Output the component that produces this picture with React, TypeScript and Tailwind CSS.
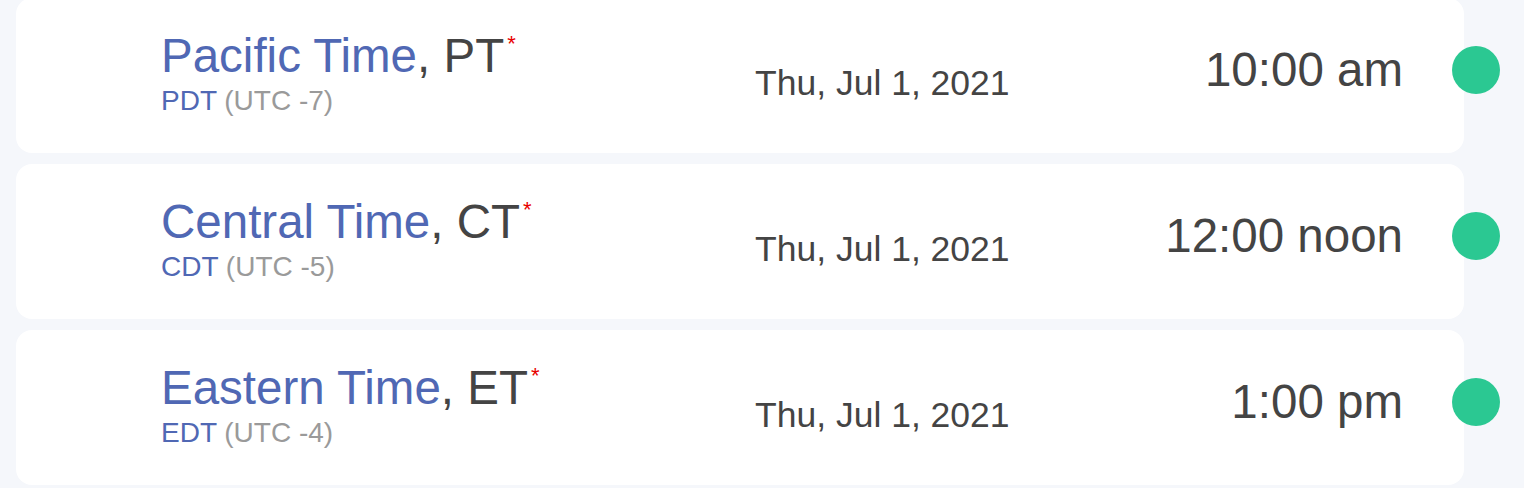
const zones = [
  { name: 'Pacific Time', abbr: 'PT', dst: 'PDT', offset: 'UTC -7', date: 'Thu, Jul 1, 2021', time: '10:00 am' },
  { name: 'Central Time', abbr: 'CT', dst: 'CDT', offset: 'UTC -5', date: 'Thu, Jul 1, 2021', time: '12:00 noon' },
  { name: 'Eastern Time', abbr: 'ET', dst: 'EDT', offset: 'UTC -4', date: 'Thu, Jul 1, 2021', time: '1:00 pm' },
];

type Zone = (typeof zones)[number];

const ZoneCard = ({ zone }: { zone: Zone }) => (
  <div className="relative flex h-[155px] w-[1448px] rounded-2xl bg-white">
    {/* Name */}
    <div className="w-[739px] pl-[145px] pt-[34px]">
      <div className="text-[47.5px] leading-none text-[#5068b4]">
        {zone.name}
        <span className="text-[#444]">, {zone.abbr}</span>
        <span className="relative top-[1px] ml-[3px] align-top text-[22px] leading-none text-[#e80000]">*</span>
      </div>
      <div className="mt-[7px] text-[28px] leading-none">
        <span className="text-[#5068b4]">{zone.dst}</span>
        <span className="text-[#9a9a9a]"> ({zone.offset})</span>
      </div>
    </div>

    {/* Date */}
    <div className="pt-[68px] text-[35.5px] leading-none text-[#444]">{zone.date}</div>

    {/* Time */}
    <div className="flex-1 pr-[61px] pt-[48px] text-right text-[47.5px] leading-none text-[#444]">{zone.time}</div>

    {/* Status dot */}
    <div className="absolute right-[-36px] top-[48px] h-12 w-12 rounded-full bg-[#2bc892]" />
  </div>
);

export default function App() {
  return (
    <div className="min-h-[490px] bg-[#f5f7fb] font-[family-name:Liberation_Sans,Arial,sans-serif]">
      <div className="mt-[-2px] flex flex-col gap-[11px] px-4 pt-0">
        {zones.map((z) => (
          <ZoneCard key={z.abbr} zone={z} />
        ))}
      </div>
    </div>
  );
}
